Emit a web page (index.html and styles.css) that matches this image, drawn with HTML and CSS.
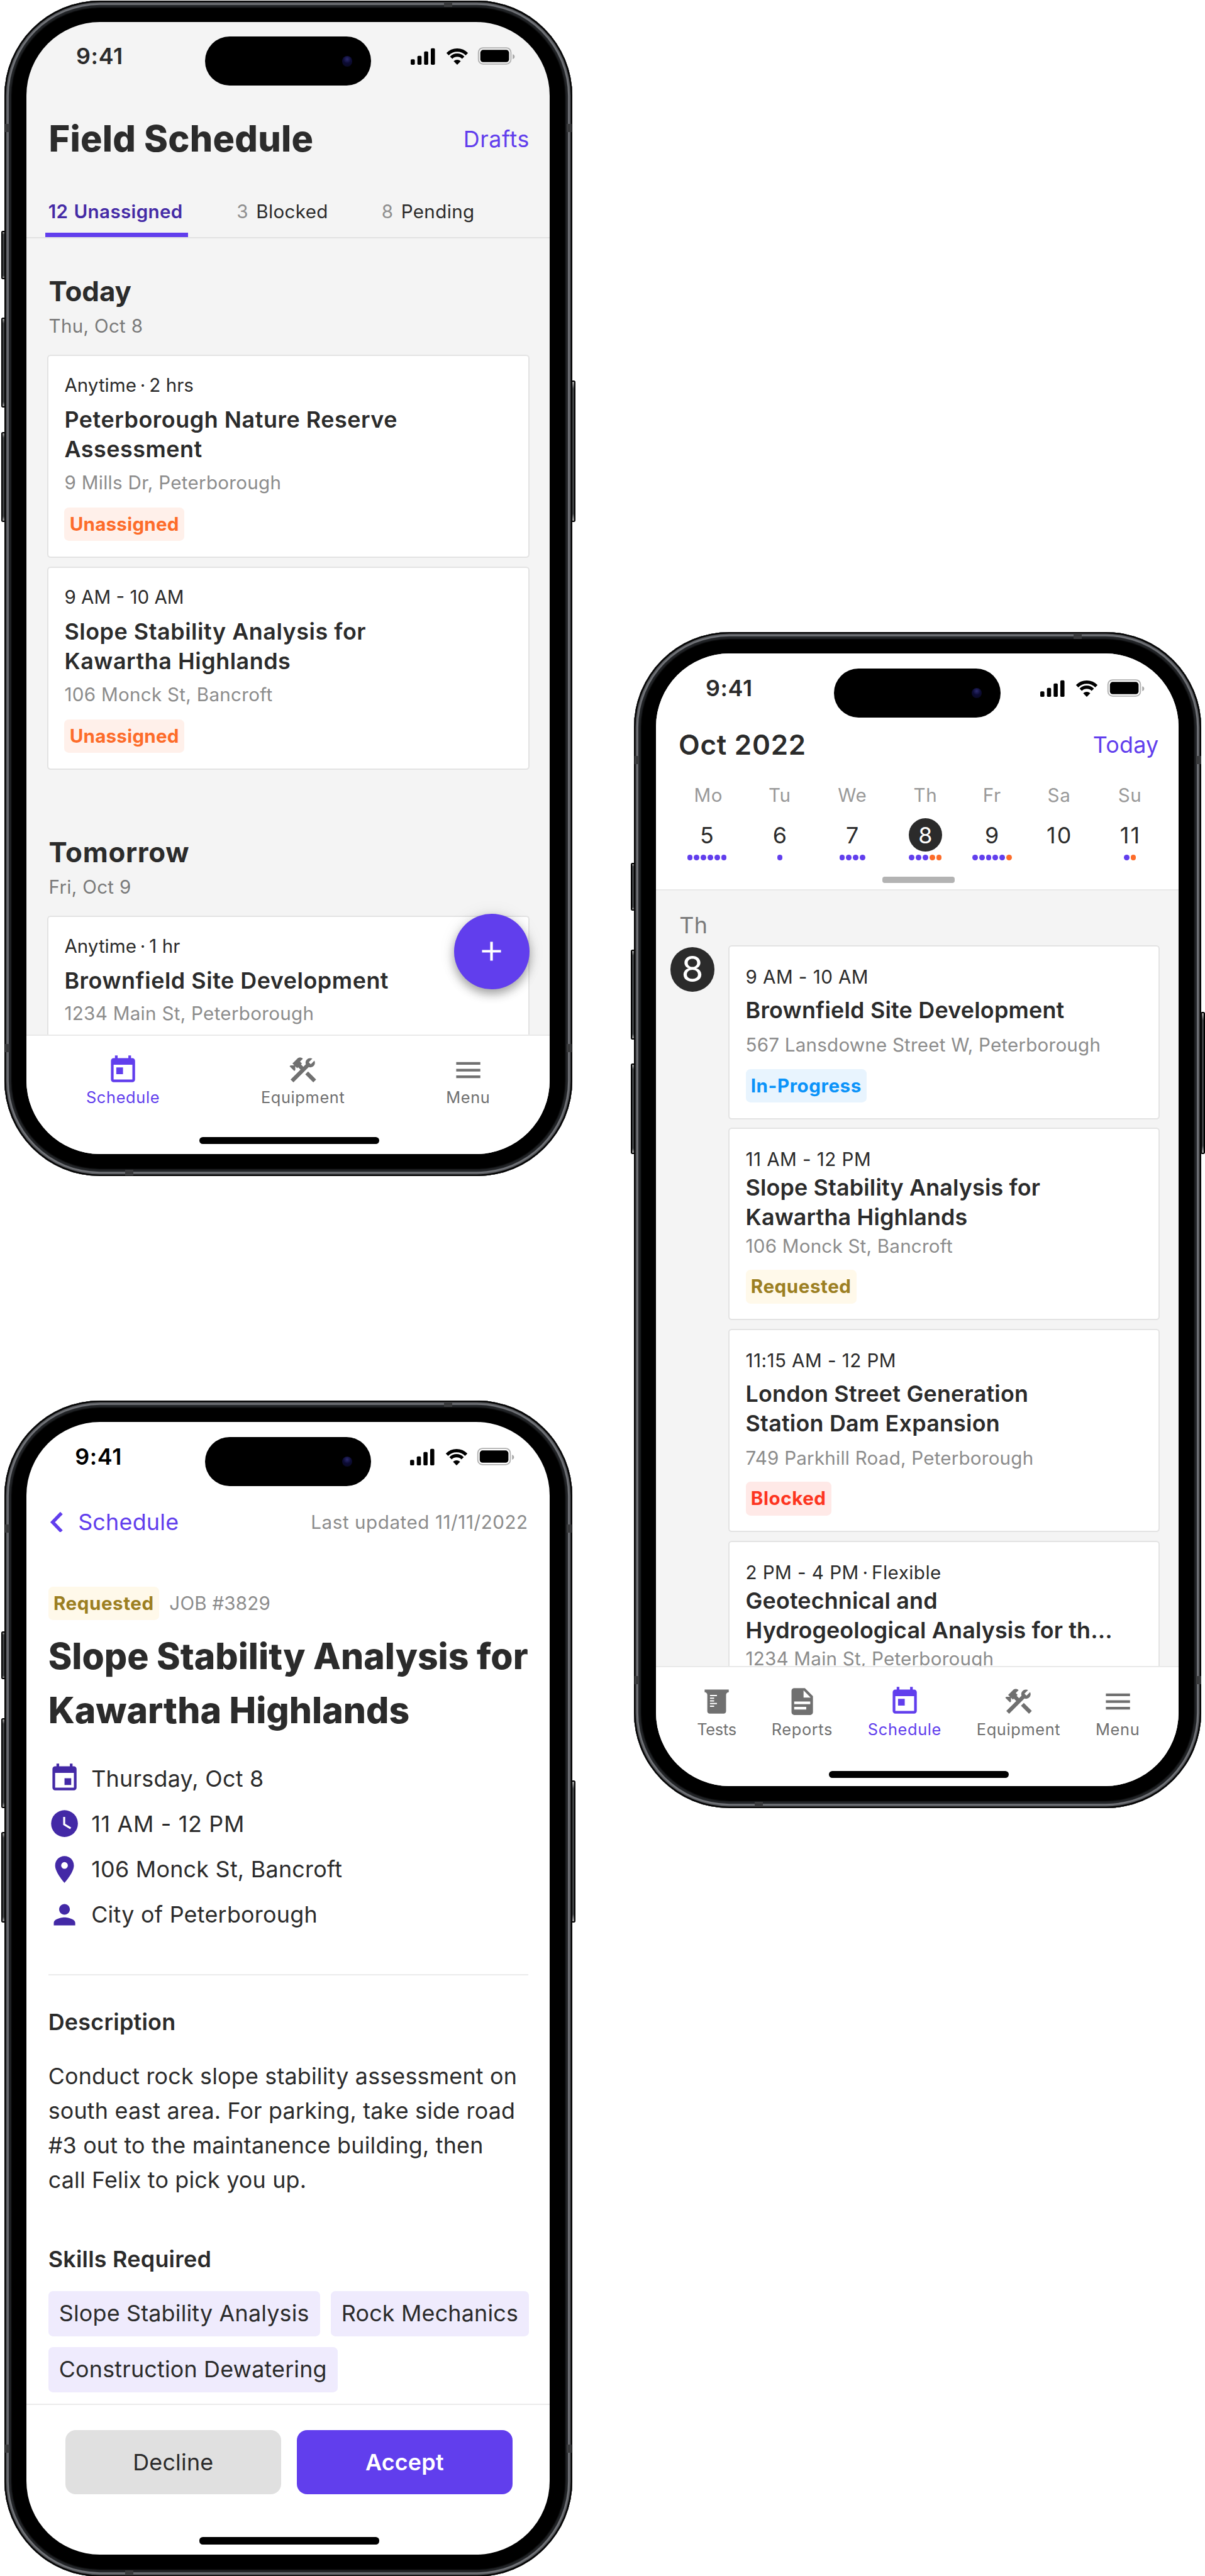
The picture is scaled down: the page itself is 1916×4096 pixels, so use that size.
FILE: index.html
```html
<!DOCTYPE html>
<html lang="en">
<head>
<meta charset="utf-8">
<title>Field Schedule</title>
<link rel="stylesheet" href="styles.css">
</head>
<body>
<svg class="sprite" aria-hidden="true">
  <symbol id="i-status" viewBox="0 0 182 31">
    <rect x="0" y="21" width="7.2" height="9.7" rx="2"/>
    <rect x="11.7" y="15" width="7.2" height="15.7" rx="2"/>
    <rect x="23.3" y="7.3" width="7.2" height="23.4" rx="2"/>
    <rect x="35" y="2" width="7.2" height="28.7" rx="2"/>
    <path d="M64.2 12.2a23.4 23.4 0 0 1 33.6 0M70.5 18.3a14.6 14.6 0 0 1 21 0" fill="none" stroke="#000" stroke-width="5.6"/>
    <path d="M74.8 24.4q6.2-5 12.4 0L81 30.8z"/>
    <rect x="118" y="1.2" width="56.6" height="28.2" rx="8" fill="none" stroke="#b0b0b0" stroke-width="2"/>
    <rect x="121.3" y="4.7" width="50" height="21.3" rx="5"/>
    <path d="M177.7 12.2q3.4 1 3.4 4.3t-3.4 4.3z" fill="#a6a6a6"/>
  </symbol>
  <symbol id="i-today" viewBox="0 0 24 24"><path d="M19 3h-1V1h-2v2H8V1H6v2H5c-1.11 0-1.99.9-1.99 2L3 19c0 1.1.89 2 2 2h14c1.1 0 2-.9 2-2V5c0-1.1-.9-2-2-2zm0 16H5V8h14v11zM7 10h5v5H7z"/></symbol>
  <symbol id="i-event" viewBox="0 0 24 24"><path d="M17 12h-5v5h5v-5zM16 1v2H8V1H6v2H5c-1.11 0-1.99.9-1.99 2L3 19c0 1.1.89 2 2 2h14c1.1 0 2-.9 2-2V5c0-1.1-.9-2-2-2h-1V1h-2zm3 18H5V8h14v11z"/></symbol>
  <symbol id="i-tools" viewBox="0 0 24 24"><path d="M13.78 15.17l2.12-2.12 5.99 5.99-2.12 2.12zM17.5 10c1.93 0 3.5-1.57 3.5-3.5 0-.58-.16-1.12-.41-1.6l-2.7 2.7-1.49-1.49 2.7-2.7c-.48-.25-1.02-.41-1.6-.41C15.57 3 14 4.57 14 6.5c0 .41.08.8.21 1.16l-1.85 1.85-1.78-1.78.71-.71-1.41-1.41L12 3.49c-1.17-1.17-3.07-1.17-4.24 0L4.22 7.03l1.41 1.41H2.81l-.71.71 3.54 3.54.71-.71V9.15l1.41 1.41.71-.71 1.78 1.78-7.41 7.41 2.12 2.12L16.34 9.79c.36.13.75.21 1.16.21z"/></symbol>
  <symbol id="i-menu" viewBox="0 0 24 24"><path d="M3 18h18v-2H3v2zm0-5h18v-2H3v2zm0-7v2h18V6H3z"/></symbol>
  <symbol id="i-tests" viewBox="0 0 24 24"><path fill-rule="evenodd" d="M3 3h18v2c-1.100 0-2 .9-2 2v12.200c0 1-.8 1.800-1.800 1.800H6.800c-1 0-1.800-.8-1.800-1.800V7c0-1.100-.9-2-2-2zM7 7v1h5.200V7zM7 9v1h3.100V9zM7 11v1h3.100v-1zM7 13v1h5.200v-1zM7 15v1h3.100v-1z"/></symbol>
  <symbol id="i-reports" viewBox="0 0 24 24"><path fill-rule="evenodd" d="M14 2H6c-1.100 0-2 .9-2 2v16c0 1.100.9 2 2 2h12c1.100 0 2-.9 2-2V8zM13 3.600L18.300 9H13zM6 12h12v2H6zM6 16h9v2H6z"/></symbol>
  <symbol id="i-clock" viewBox="0 0 24 24"><path fill-rule="evenodd" d="M12 2a10 10 0 1 0 0 20 10 10 0 0 0 0-20zm4.200 14.200L11 13V7h1.500v5.200l4.500 2.700z"/></symbol>
  <symbol id="i-pin" viewBox="0 0 24 24"><path d="M12 2C8.130 2 5 5.130 5 9c0 5.250 7 13 7 13s7-7.750 7-13c0-3.870-3.130-7-7-7zm0 9.500a2.500 2.500 0 0 1 0-5 2.500 2.500 0 0 1 0 5z"/></symbol>
  <symbol id="i-person" viewBox="0 0 24 24"><path d="M12 12c2.210 0 4-1.790 4-4s-1.790-4-4-4-4 1.790-4 4 1.790 4 4 4zm0 2c-2.670 0-8 1.340-8 4v2h16v-2c0-2.660-5.330-4-8-4z"/></symbol>
</svg>

<main class="board">
  <div class="column">
    <section class="phone">
      <i class="key key-action"></i><i class="key key-up"></i><i class="key key-down"></i><i class="key key-side"></i>
      <div class="frame">
        <i class="band band-tl"></i><i class="band band-tr"></i><i class="band band-bl"></i><i class="band band-br"></i><i class="band band-top"></i><i class="band band-bottom"></i>
        <div class="screen screen-grey graphik">
          <div class="status"><span class="time">9:41</span><svg class="status-icons"><use href="#i-status"/></svg><div class="island"><i class="lens"></i></div></div>
          <header class="title-bar"><h1>Field Schedule</h1><a class="link">Drafts</a></header>
          <nav class="tabs">
            <a class="tab tab-active"><span>12</span><span>Unassigned</span></a>
            <a class="tab"><span class="count">3</span><span>Blocked</span></a>
            <a class="tab"><span class="count">8</span><span>Pending</span></a>
          </nav>
          <div class="list">
            <h2>Today</h2>
            <p class="date">Thu, Oct 8</p>
            <div class="cards">
              <article class="card">
                <p class="when">Anytime<span class="sep"> · </span>2 hrs</p>
                <h3>Peterborough Nature Reserve<br>Assessment</h3>
                <p class="where">9 Mills Dr, Peterborough</p>
                <span class="badge unassigned">Unassigned</span>
              </article>
              <article class="card">
                <p class="when">9 AM - 10 AM</p>
                <h3>Slope Stability Analysis for<br>Kawartha Highlands</h3>
                <p class="where">106 Monck St, Bancroft</p>
                <span class="badge unassigned">Unassigned</span>
              </article>
            </div>
            <h2 class="next">Tomorrow</h2>
            <p class="date">Fri, Oct 9</p>
            <div class="cards">
              <article class="card">
                <p class="when">Anytime<span class="sep"> · </span>1 hr</p>
                <h3>Brownfield Site Development</h3>
                <p class="where">1234 Main St, Peterborough</p>
              </article>
            </div>
          </div>
          <button class="fab" aria-label="New job"><svg viewBox="0 0 34 34"><path d="M17 .5v33M.5 17h33" stroke="#fff" stroke-width="4.600"/></svg></button>
          <nav class="nav nav-three">
            <a class="nav-item active"><svg class="icon"><use href="#i-today"/></svg>Schedule</a>
            <a class="nav-item"><svg class="icon"><use href="#i-tools"/></svg>Equipment</a>
            <a class="nav-item"><svg class="icon"><use href="#i-menu"/></svg>Menu</a>
          </nav>
          <i class="home"></i>
        </div>
      </div>
    </section>

    <section class="phone">
      <i class="key key-action"></i><i class="key key-up"></i><i class="key key-down"></i><i class="key key-side"></i>
      <div class="frame">
        <i class="band band-tl"></i><i class="band band-tr"></i><i class="band band-bl"></i><i class="band band-br"></i><i class="band band-top"></i><i class="band band-bottom"></i>
        <div class="screen">
          <div class="status status-dark"><span class="time">9:41</span><svg class="status-icons"><use href="#i-status"/></svg><div class="island"><i class="lens"></i></div></div>
          <div class="detail">
            <header class="crumb"><a class="link back"><svg class="chevron" viewBox="0 0 22 36"><path d="M19.500 2L4 18l15.500 16" fill="none" stroke="#613eed" stroke-width="6"/></svg>Schedule</a><span class="updated">Last updated 11/11/2022</span></header>
            <div class="job"><span class="badge requested">Requested</span><span class="job-no">JOB #3829</span></div>
            <h1 class="job-title">Slope Stability Analysis for<br>Kawartha Highlands</h1>
            <ul class="facts">
              <li><svg class="icon"><use href="#i-event"/></svg>Thursday, Oct 8</li>
              <li class="hours"><svg class="icon"><use href="#i-clock"/></svg>11 AM - 12 PM</li>
              <li><svg class="icon"><use href="#i-pin"/></svg>106 Monck St, Bancroft</li>
              <li><svg class="icon"><use href="#i-person"/></svg>City of Peterborough</li>
            </ul>
            <h4 class="label ruled">Description</h4>
            <p class="body">Conduct rock slope stability assessment on<br>south east area. For parking, take side road<br>#3 out to the maintanence building, then<br>call Felix to pick you up.</p>
            <h4 class="label">Skills Required</h4>
            <div class="chips"><span class="chip">Slope Stability Analysis</span><span class="chip">Rock Mechanics</span><span class="chip">Construction Dewatering</span></div>
          </div>
          <footer class="actions"><button class="btn">Decline</button><button class="btn btn-primary">Accept</button></footer>
          <i class="home"></i>
        </div>
      </div>
    </section>
  </div>

  <div class="column column-offset">
    <section class="phone">
      <i class="key key-action"></i><i class="key key-up"></i><i class="key key-down"></i><i class="key key-side"></i>
      <div class="frame">
        <i class="band band-tl"></i><i class="band band-tr"></i><i class="band band-bl"></i><i class="band band-br"></i><i class="band band-top"></i><i class="band band-bottom"></i>
        <div class="screen screen-grey">
          <div class="calendar">
            <div class="status"><span class="time">9:41</span><svg class="status-icons"><use href="#i-status"/></svg><div class="island"><i class="lens"></i></div></div>
            <header class="month"><h2>Oct 2022</h2><a class="link">Today</a></header>
            <div class="week">
              <div class="day"><span class="day-name">Mo</span><span class="day-no">5</span><span class="dots"><i></i><i></i><i></i><i></i><i></i><i></i></span></div>
              <div class="day"><span class="day-name">Tu</span><span class="day-no">6</span><span class="dots"><i></i></span></div>
              <div class="day"><span class="day-name">We</span><span class="day-no">7</span><span class="dots"><i></i><i></i><i></i><i></i></span></div>
              <div class="day"><span class="day-name">Th</span><span class="day-no current">8</span><span class="dots"><i></i><i></i><i></i><i class="hot"></i><i class="hot"></i></span></div>
              <div class="day"><span class="day-name">Fr</span><span class="day-no">9</span><span class="dots"><i></i><i></i><i></i><i></i><i></i><i class="hot"></i></span></div>
              <div class="day"><span class="day-name">Sa</span><span class="day-no">10</span></div>
              <div class="day"><span class="day-name">Su</span><span class="day-no">11</span><span class="dots"><i></i><i class="hot"></i></span></div>
            </div>
            <i class="handle"></i>
          </div>
          <div class="agenda">
            <div class="agenda-day"><span class="agenda-name">Th</span><span class="agenda-no">8</span></div>
            <div class="cards">
              <article class="card">
                <p class="when">9 AM - 10 AM</p>
                <h3>Brownfield Site Development</h3>
                <p class="where">567 Lansdowne Street W, Peterborough</p>
                <span class="badge in-progress">In-Progress</span>
              </article>
              <article class="card compact">
                <p class="when">11 AM - 12 PM</p>
                <h3>Slope Stability Analysis for<br>Kawartha Highlands</h3>
                <p class="where">106 Monck St, Bancroft</p>
                <span class="badge requested">Requested</span>
              </article>
              <article class="card">
                <p class="when">11:15 AM - 12 PM</p>
                <h3>London Street Generation<br>Station Dam Expansion</h3>
                <p class="where">749 Parkhill Road, Peterborough</p>
                <span class="badge blocked">Blocked</span>
              </article>
              <article class="card compact">
                <p class="when">2 PM - 4 PM<span class="sep"> · </span>Flexible</p>
                <h3>Geotechnical and<br>Hydrogeological Analysis for th...</h3>
                <p class="where">1234 Main St, Peterborough</p>
              </article>
            </div>
          </div>
          <nav class="nav nav-five">
            <a class="nav-item"><svg class="icon"><use href="#i-tests"/></svg>Tests</a>
            <a class="nav-item"><svg class="icon"><use href="#i-reports"/></svg>Reports</a>
            <a class="nav-item active"><svg class="icon"><use href="#i-today"/></svg>Schedule</a>
            <a class="nav-item"><svg class="icon"><use href="#i-tools"/></svg>Equipment</a>
            <a class="nav-item"><svg class="icon"><use href="#i-menu"/></svg>Menu</a>
          </nav>
          <i class="home home-low"></i>
        </div>
      </div>
    </section>
  </div>
</main>
</body>
</html>
```
FILE: styles.css
```css
/* 1rem equals 100 design pixels. */
html { font-size: 91.325px; }
*, *::before, *::after { box-sizing: border-box; }
body, h1, h2, h3, h4, p, ul { margin: 0; padding: 0; }
body { background: #fff; color: #2b2b2b; font-family: Inter, "Liberation Sans", sans-serif; font-size: .393rem; letter-spacing: .006em; }
ul { list-style: none; }
button { border: 0; padding: 0; font: inherit; letter-spacing: inherit; color: inherit; }
.sprite { position: absolute; width: 0; height: 0; }

.board { display: flex; justify-content: space-between; width: 20.98rem; height: 44.85rem; padding-left: .02rem; overflow: hidden; }
.column { display: flex; flex-direction: column; gap: 3.9rem; }
.column-offset { padding-top: 11rem; }

/* Device */
.phone { position: relative; flex: none; width: 10rem; height: 20.48rem; padding: .01rem .06rem 0; }
.frame { position: relative; width: 9.88rem; height: 20.47rem; padding: .37rem .395rem .385rem .385rem; border-radius: 1.66rem; background: #000;
  box-shadow: inset 0 0 0 .028rem #050505, inset 0 0 .01rem .05rem #55575b, inset 0 0 .01rem .075rem #77797e, inset 0 0 .02rem .12rem #222427; }
.screen { position: relative; display: flex; flex-direction: column; height: 100%; border-radius: 1.28rem; background: #fff; overflow: hidden; }
.screen-grey { background: #f4f4f4; }
.key { position: absolute; left: 0; width: .08rem; border: 2px solid #000; border-radius: .03rem; background: linear-gradient(#aaa, #3f4143 5%, #3f4143 95%, #aaa); }
.key-action { top: 4.02rem; height: .84rem; }
.key-up { top: 5.53rem; height: 1.57rem; }
.key-down { top: 7.52rem; height: 1.57rem; }
.key-side { left: auto; right: 0; top: 6.62rem; height: 2.47rem; }
.band { position: absolute; width: .08rem; height: .14rem; background: #3a3b3d; }
.band-tl { left: .01rem; top: 2.15rem; }
.band-tr { right: .01rem; top: 2.15rem; }
.band-bl { left: .01rem; bottom: 2.16rem; }
.band-br { right: .01rem; bottom: 2.16rem; }
.band-top { left: 7.65rem; top: .02rem; width: .14rem; height: .09rem; }
.band-bottom { left: 2.1rem; bottom: .02rem; width: .14rem; height: .09rem; }

.status { position: relative; flex: none; display: flex; align-items: center; justify-content: space-between; height: 1.2rem; padding: 0 .595rem 0 .86rem; }
.time { font-weight: 600; letter-spacing: .018em; }
.status-dark { padding-left: .84rem; padding-right: .61rem; color: #000; }
.status-icons { width: 1.82rem; height: .31rem; }
.island { position: absolute; left: 3.1rem; top: .26rem; width: 2.9rem; height: .85rem; border-radius: .43rem; background: #000; }
.lens { position: absolute; right: .33rem; top: .34rem; width: .18rem; height: .18rem; border-radius: 50%; background: radial-gradient(circle at 50% 30%, #2b2a6e 0, #0c0b33 45%, #08081c 100%); }
.home { position: absolute; left: 3.01rem; bottom: .175rem; width: 3.125rem; height: .125rem; border-radius: .06rem; background: #000; }
.home-low { bottom: .14rem; }
.icon { display: block; width: .56rem; height: .56rem; fill: currentColor; }
.link { color: #613eed; }

/* Job list */
.title-bar { flex: none; display: flex; align-items: center; justify-content: space-between; padding: .455rem .345rem 0 .385rem; }
.title-bar .link { letter-spacing: .015em; }
h1 { font-size: .63rem; line-height: .76rem; font-weight: 800; letter-spacing: .004em; }
.tabs { flex: none; display: flex; gap: .8rem; padding-left: .325rem; margin-top: .69rem; border-bottom: 2px solid #e2e2e2; letter-spacing: .01em; }
.tab { display: flex; gap: .135rem; padding: 0 .08rem .17rem .05rem; border-bottom: 7px solid transparent; font-size: .324rem; line-height: .4rem; }
.tab-active { width: 2.48rem; gap: .1rem; border-color: #613eed; color: #452ba6; font-weight: 600; }
.count { color: #8f8f8f; }
.list { flex: 1; min-height: 0; overflow: hidden; padding: .63rem .345rem 0 .355rem; }
.list h2 { padding-left: .03rem; font-size: .48rem; line-height: .6rem; font-weight: 700; letter-spacing: 0; }
.list .next { margin-top: 1.145rem; letter-spacing: .016em; }
.date { margin: .095rem 0 .3rem; padding-left: .03rem; font-size: .324rem; line-height: .4rem; color: #7a7a7a; letter-spacing: .01em; }
.cards { display: flex; flex-direction: column; gap: .155rem; }
.card { flex: none; padding: .31rem .28rem .27rem; border: 2px solid #e3e3e3; border-radius: .06rem; background: #fff; }
.when { font-size: .324rem; line-height: .4rem; letter-spacing: .015em; }
.sep { letter-spacing: -.08em; margin-right: .08em; }
.graphik .when { letter-spacing: 0; }
.card h3 { margin: .14rem 0 .117rem; font-size: .393rem; line-height: .515rem; font-weight: 600; white-space: nowrap; }
.graphik h3 { letter-spacing: .015em; }
.where { font-size: .324rem; line-height: .4rem; color: #8c8c8c; white-space: nowrap; }
.graphik .where { letter-spacing: .01em; }
.badge { display: block; width: fit-content; margin-top: .24rem; padding: 0 .09rem; border-radius: .08rem; font-size: .324rem; line-height: .585rem; font-weight: 700; letter-spacing: .019em; }
.unassigned { background: #fff0ea; color: #fd6c2a; letter-spacing: .008em; }
.in-progress { background: #e8f4fe; color: #0b93f9; }
.requested { background: #fff9ea; color: #9c7f22; }
.blocked { background: #ffe9e7; color: #fd3520; }

.fab { position: absolute; right: .35rem; top: 15.53rem; display: grid; place-items: center; width: 1.31rem; height: 1.31rem; border-radius: 50%; background: #613eed; box-shadow: 0 .08rem .18rem rgba(0,0,0,.35), 0 0 .3rem rgba(0,0,0,.08); }
.fab svg { width: .34rem; height: .34rem; }

.nav { flex: none; display: flex; justify-content: space-between; height: 2.085rem; padding-top: .315rem; border-top: 2px solid #e9e9e9; background: #fff; color: #707070; font-size: .278rem; line-height: .36rem; letter-spacing: .025em; }
.nav-three { padding-left: 1.035rem; padding-right: 1.03rem; }
.nav-five { padding-left: .71rem; padding-right: .68rem; }
.nav-five .nav-item:first-child { letter-spacing: -.01em; }
.nav-item { display: flex; flex-direction: column; align-items: center; gap: .025rem; }
.nav .active { color: #613eed; }

/* Calendar */
.calendar { flex: none; background: #fff; border-bottom: 2px solid #e9e9e9; }
.month { display: flex; align-items: center; justify-content: space-between; height: .6rem; margin-top: .1rem; padding: 0 .35rem 0 .39rem; }
.month h2 { font-size: .48rem; line-height: .6rem; font-weight: 600; letter-spacing: .018em; }
.month .link { padding-bottom: .04rem; }
.week { display: grid; grid-template-columns: 1.256rem 1.282rem 1.244rem 1.3rem 1.02rem 1.316rem 1.15rem; margin: .365rem 0 0 .255rem; height: 1.34rem; }
.day { display: flex; flex-direction: column; align-items: center; }
.day-name { font-size: .324rem; line-height: .4rem; color: #999; letter-spacing: .02em; }
.day:first-child .day-name { padding-left: .05rem; }
.day-no { width: .58rem; height: .58rem; margin: .2rem 0 .06rem; border-radius: 50%; line-height: .6rem; text-align: center; }
.day:nth-child(n+6) .day-no { padding-left: .02rem; letter-spacing: .06em; }
.current { background: #2b2b2b; color: #fff; }
.dots { display: flex; gap: .022rem; }
.dots i { width: .096rem; height: .096rem; border-radius: 50%; background: #613eed; }
.dots .hot { background: #fd6c2a; }
.handle { display: block; width: 1.26rem; height: .1rem; margin: .285rem 0 .118rem 3.935rem; border-radius: .04rem; background: #b3b3b3; }
.agenda { flex: 1; min-height: 0; overflow: hidden; display: flex; }
.agenda-day { flex: none; width: 1.255rem; padding: .355rem 0 0 .245rem; }
.agenda-name { display: block; padding-left: .16rem; line-height: .5rem; color: #7a7a7a; }
.agenda-no { display: block; width: .775rem; height: .775rem; margin-top: .13rem; border-radius: 50%; background: #2b2b2b; color: #fff; font-size: .62rem; line-height: .775rem; text-align: center; }
.agenda .cards { flex: none; width: 7.51rem; padding-top: .95rem; gap: .148rem; }
.agenda .card { padding: .328rem .28rem .268rem; }
.agenda h3 { margin: .13rem 0 .14rem; }
.agenda .compact h3 { margin: .035rem 0 .04rem; letter-spacing: .004em; }
.agenda .badge { margin-top: .22rem; }

/* Job detail */
.detail { flex: 1; min-height: 0; padding: .26rem .37rem 0 .375rem; }
.crumb { display: flex; align-items: center; justify-content: space-between; height: .56rem; }
.back { display: flex; align-items: center; gap: .265rem; padding-left: .035rem; }
.chevron { width: .22rem; height: .36rem; }
.updated, .job-no { font-size: .324rem; color: #8c8c8c; }
.updated { letter-spacing: .019em; }
.job { display: flex; align-items: center; gap: .18rem; margin-top: .845rem; }
.job .badge { margin: 0; }
.job-title { margin-top: .165rem; font-size: .625rem; line-height: .94rem; letter-spacing: 0; white-space: nowrap; }
.facts { display: flex; flex-direction: column; gap: .23rem; margin-top: .43rem; letter-spacing: .007em; }
.facts li { display: flex; align-items: center; gap: .19rem; height: .56rem; }
.facts .hours { letter-spacing: .019em; }
.facts .icon { color: #4329a6; }
.label { margin-top: .835rem; line-height: .5rem; font-weight: 600; letter-spacing: .007em; }
.ruled { margin-top: .76rem; padding-top: .57rem; border-top: 2px solid #ebebeb; }
.body { margin-top: .385rem; line-height: .602rem; letter-spacing: .005em; white-space: nowrap; }
.chips { display: flex; flex-wrap: wrap; gap: .19rem .185rem; margin: .297rem -.2rem 0 0; }
.chip { padding: 0 .187rem; border-radius: .08rem; background: #efebfd; line-height: .785rem; letter-spacing: .005em; }
.actions { flex: none; display: flex; gap: .28rem; height: 2.625rem; padding: .435rem 0 0 .675rem; border-top: 2px solid #ebebeb; }
.btn { width: 3.75rem; height: 1.123rem; border-radius: .18rem; background: #e0e0e0; }
.btn-primary { background: #613eed; color: #fff; font-weight: 600; }
```
